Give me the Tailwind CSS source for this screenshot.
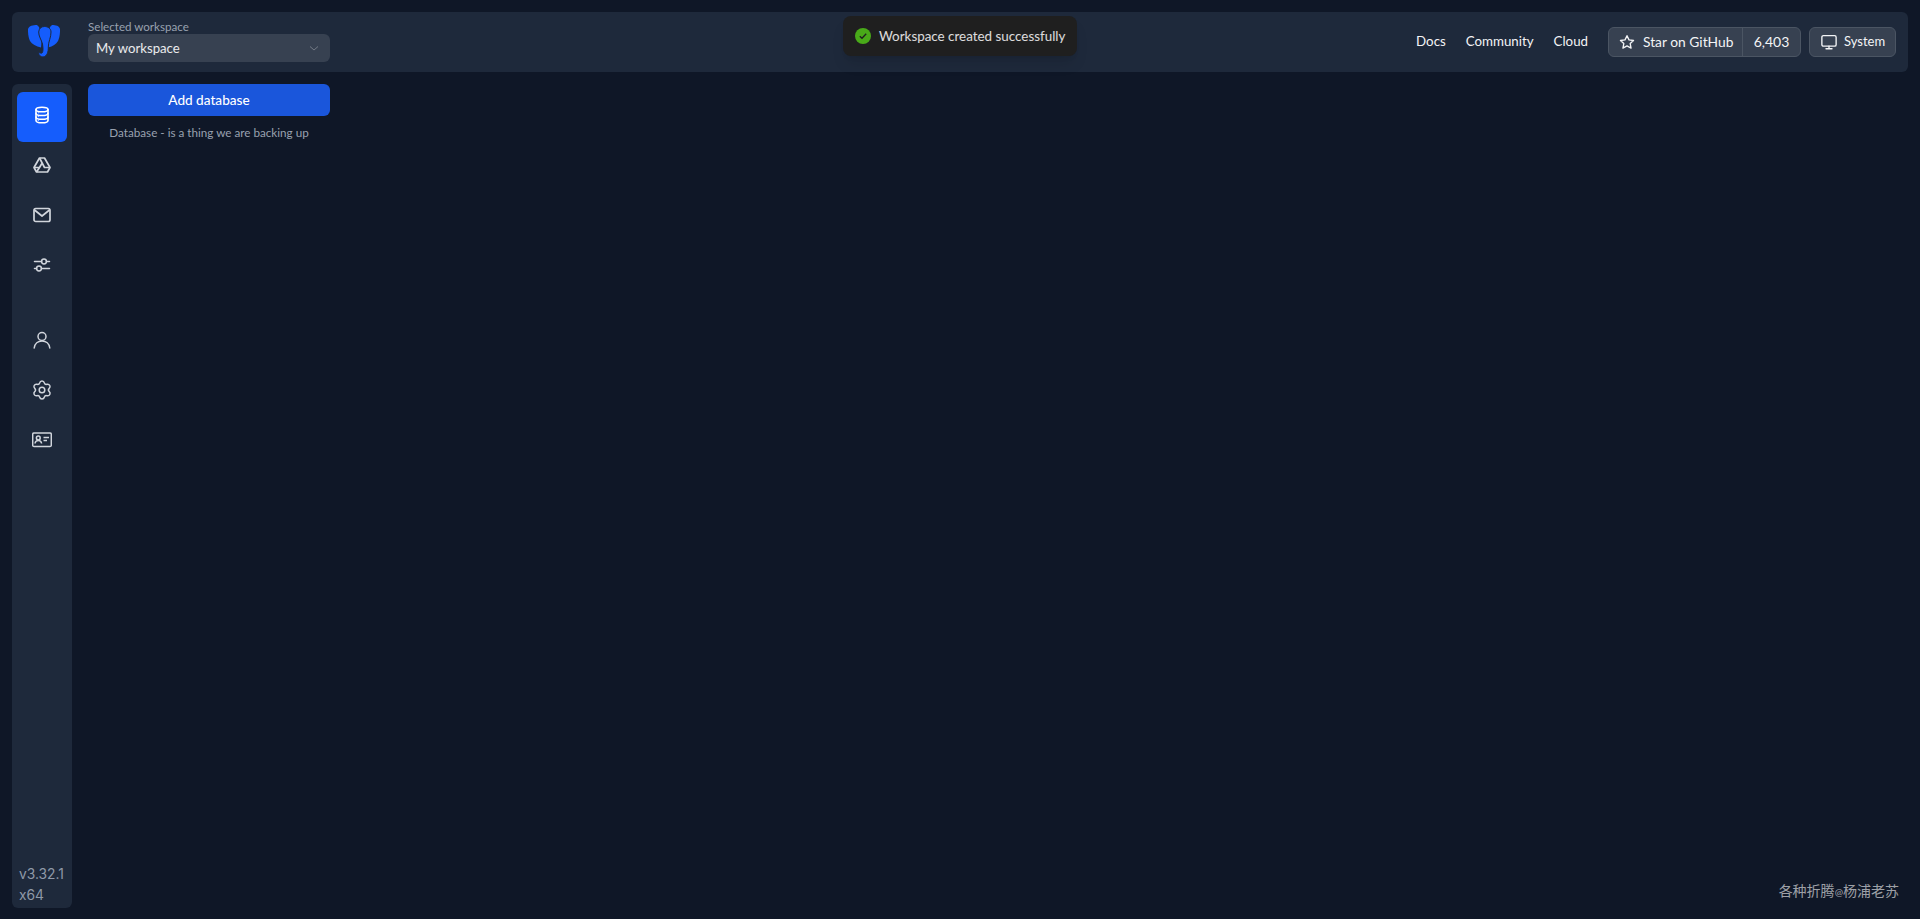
<!DOCTYPE html>
<html lang="en">

<head>
    <meta charset="UTF-8" />
    <meta name="viewport" content="width=device-width, initial-scale=1.0" />
    <title>Postgresus</title>
    <script src="https://cdn.jsdelivr.net/npm/@tailwindcss/browser@4"></script>
</head>

<body class="relative h-[919px] overflow-hidden bg-[#0f1727] font-['Lato','Noto_Sans_CJK_SC',sans-serif] text-white">
    <div class="flex h-full flex-col gap-3 p-3 pb-[11px]">
        <!-- top bar -->
        <header class="flex h-[60px] shrink-0 items-center rounded-md bg-[#1e293b] pr-3">
            <div class="flex w-[76px] pl-4">
                <svg class="mt-[-2px] h-8 w-8" viewBox="0 0 32 32" fill="#155dfc">
                    <path d="M9 0 C5 0 1 0.800 0 4 C-0.200 8 0.500 13 2 16 C4 19 8 21.500 13 22.500 L14 12 L11 2 Z" />
                    <path d="M24 0 C28 0 31 0.800 32 4 C32.200 8 31.500 13 30 16 C28 19 25 21.500 20 22.500 L19 12 L22 2 Z" />
                    <path stroke="#1e293b" stroke-width="1" d="M16.500 1.500 C13 1.500 11 3.500 10.700 7 C10.500 11 13.500 15 14.500 19 C15 23 15.500 26 14 28 C13 28.500 11.500 27.500 10.500 27.500 C10.500 30 12.500 32 15 32 C19 31.500 20.500 27 20.300 22 C20.200 17 23.200 12 23 7 C23 3.500 20 1.500 16.500 1.500 Z" />
                </svg>
            </div>
            <div class="mb-[3px] w-[242px]">
                <div class="text-[11.6px] leading-[15px] text-[#99a1af]">Selected workspace</div>
                <div class="flex h-7 items-center justify-between rounded-md bg-[#374151] pr-[10px] pl-2">
                    <span class="pt-[2px] text-[13.2px] text-white/90">My workspace</span>
                    <svg class="h-3 w-3 text-white/30" viewBox="0 0 12 12" fill="none" stroke="currentColor" stroke-width="1">
                        <path d="M2 4.500 L6 8 L10 4.500" />
                    </svg>
                </div>
            </div>
            <nav class="ml-auto flex items-center gap-5 text-[13.3px] text-gray-100">
                <a>Docs</a>
                <a>Community</a>
                <a>Cloud</a>
            </nav>
            <div class="ml-5 flex h-[30px] w-[193px] items-center rounded-md border border-[#4b5563] bg-[#374151] text-sm text-gray-100">
                <div class="flex h-full w-[134px] items-center gap-2 border-r border-[#4b5563] pl-[10px]">
                    <svg class="h-4 w-4 shrink-0" viewBox="0 0 24 24" fill="none" stroke="currentColor" stroke-width="2" stroke-linejoin="round">
                        <path d="M12 2.500 L15 8.800 L21.800 9.700 L16.800 14.400 L18.100 21.200 L12 17.900 L5.900 21.200 L7.200 14.400 L2.200 9.700 L9 8.800 Z" />
                    </svg>
                    <span class="text-[13.8px]">Star on GitHub</span>
                </div>
                <span class="flex-1 text-center">6,403</span>
            </div>
            <div class="ml-2 flex h-[30px] w-[87px] items-center gap-[6px] rounded-md border border-[#4b5563] bg-[#374151] pl-[10px] text-[13px] text-gray-100">
                <svg class="h-[18px] w-[18px] shrink-0" viewBox="0 0 24 24" fill="none" stroke="currentColor" stroke-width="1.800" stroke-linecap="round">
                    <rect x="2.500" y="3.500" width="19" height="14" rx="2" />
                    <path d="M12 17.500 V21 M8 21 H16" />
                </svg>
                <span>System</span>
            </div>
        </header>

        <div class="flex min-h-0 flex-1 gap-4">
            <!-- side menu -->
            <aside class="flex w-[60px] shrink-0 flex-col rounded-md bg-[#1e293b] px-[5px] pt-2 pb-[2px] text-gray-300">
                <div class="flex h-[50px] items-center justify-center rounded-md bg-[#155dfc] pb-1 text-white">
                    <svg class="h-[18px] w-[18px]" viewBox="0 0 18 18" fill="none" stroke="currentColor" stroke-width="1.600" stroke-linecap="round">
                        <ellipse cx="9" cy="3.500" rx="6" ry="2.300" />
                        <path d="M3 3.500 V14.500 C3 15.800 5.700 16.800 9 16.800 C12.300 16.800 15 15.800 15 14.500 V3.500" />
                        <path d="M3 7.200 C3 8.500 5.700 9.500 9 9.500 C12.300 9.500 15 8.500 15 7.200" />
                        <path d="M3 11 C3 12.300 5.700 13.300 9 13.300 C12.300 13.300 15 12.300 15 11" />
                        <path d="M5.200 6.800 H5.300 M5.200 10.600 H5.300 M5.200 14.400 H5.300" stroke-width="1" />
                    </svg>
                </div>
                <div class="flex h-[50px] items-center justify-center pb-1">
                    <svg class="h-[18px] w-[18px]" viewBox="0 0 18 18" fill="none" stroke="currentColor" stroke-width="1.700" stroke-linejoin="round">
                        <path d="M6.500 2 H11.500 L17 11.500 L14.500 16 H3.500 L1 11.500 Z" />
                        <path d="M6.500 2 L11.500 11.500 H17 M1 11.500 H6.500 L3.500 16 M6.500 11.500 L9 7.200" />
                    </svg>
                </div>
                <div class="flex h-[50px] items-center justify-center pb-1">
                    <svg class="h-[18px] w-[18px]" viewBox="0 0 18 18" fill="none" stroke="currentColor" stroke-width="1.700" stroke-linejoin="round">
                        <rect x="1" y="2.500" width="16" height="13" rx="1.800" />
                        <path d="M1.500 4 L9 10 L16.500 4" />
                    </svg>
                </div>
                <div class="flex h-[50px] items-center justify-center pb-1">
                    <svg class="h-[18px] w-[18px]" viewBox="0 0 18 18" fill="none" stroke="currentColor" stroke-width="1.500" stroke-linecap="round">
                        <path d="M1.500 5.500 H8.500 M13.500 5.500 H16.500 M1.500 12.500 H3.500 M8.500 12.500 H16.500" />
                        <circle cx="11" cy="5.500" r="2.400" />
                        <circle cx="6" cy="12.500" r="2.400" />
                    </svg>
                </div>
                <div class="mt-[23px] flex h-[50px] items-center justify-center">
                    <svg class="h-[18px] w-[18px]" viewBox="0 0 18 18" fill="none" stroke="currentColor" stroke-width="1.500" stroke-linecap="round">
                        <circle cx="9" cy="5.500" r="4" />
                        <path d="M1.200 17 C1.800 12.800 5 10 9 10 C13 10 16.200 12.800 16.800 17" />
                    </svg>
                </div>
                <div class="flex h-[50px] items-center justify-center">
                    <svg class="h-5 w-5" viewBox="0 0 20 20" fill="none" stroke="currentColor" stroke-width="1.500" stroke-linejoin="round">
                        <path d="M7.600 3 C8 1.600 9 1 10 1 C11 1 12 1.600 12.400 3 C12.800 4.200 13.600 4.600 14.800 4.300 C16.200 4 17.200 4.400 17.800 5.500 C18.400 6.600 18.100 7.700 17.100 8.600 C16.200 9.500 16.200 10.500 17.100 11.400 C18.100 12.300 18.400 13.400 17.800 14.500 C17.200 15.600 16.200 16 14.800 15.700 C13.600 15.400 12.800 15.800 12.400 17 C12 18.400 11 19 10 19 C9 19 8 18.400 7.600 17 C7.200 15.800 6.400 15.400 5.200 15.700 C3.800 16 2.800 15.600 2.200 14.500 C1.600 13.400 1.900 12.300 2.900 11.400 C3.800 10.500 3.800 9.500 2.900 8.600 C1.900 7.700 1.600 6.600 2.200 5.500 C2.800 4.400 3.800 4 5.200 4.300 C6.400 4.600 7.200 4.200 7.600 3 Z" />
                        <circle cx="10" cy="10" r="2.800" />
                    </svg>
                </div>
                <div class="flex h-[50px] items-center justify-center">
                    <svg class="h-5 w-5" viewBox="0 0 20 20" fill="none" stroke="currentColor" stroke-width="1.500">
                        <rect x="0.700" y="3" width="18.600" height="13.500" rx="1.300" />
                        <circle cx="6.300" cy="8" r="1.900" />
                        <path d="M3 13.500 C3.300 11.500 4.500 10.500 6.300 10.500 C8.100 10.500 9.300 11.500 9.600 13.500" />
                        <path d="M11.500 7.500 H17 M11.500 10.500 H15" />
                    </svg>
                </div>
                <div class="mt-auto pl-[2px] font-['Inter',sans-serif] text-[13.8px] leading-[21px] text-[#8f99a8]">
                    <div>v3.32.1</div>
                    <div>x64</div>
                </div>
            </aside>

            <!-- database list -->
            <main class="w-[242px]">
                <button class="h-8 w-full rounded-md bg-[#1a56db] text-[13.6px] font-medium text-white">Add database</button>
                <p class="mt-1 text-center text-[11.7px] leading-[25px] text-[#99a1af]">Database - is a thing we are backing up</p>
            </main>
        </div>
    </div>

    <!-- toast -->
    <div class="absolute top-4 left-[843px] flex h-10 w-[234px] items-center gap-2 rounded-lg bg-[#1f1f1f] pl-3 text-[13.4px] text-white/85 shadow-lg">
        <svg class="h-4 w-4 shrink-0" viewBox="0 0 16 16">
            <circle cx="8" cy="8" r="8" fill="#49aa19" />
            <path d="M4.800 8.200 L7 10.300 L11.200 5.800" fill="none" stroke="#1f1f1f" stroke-width="1.300" />
        </svg>
        <span>Workspace created successfully</span>
    </div>

    <!-- watermark -->
    <div class="absolute right-[21px] bottom-[17px] text-sm leading-5 text-white/60">各种折腾<span class="text-[10px]">@</span>杨浦老苏</div>
</body>

</html>
